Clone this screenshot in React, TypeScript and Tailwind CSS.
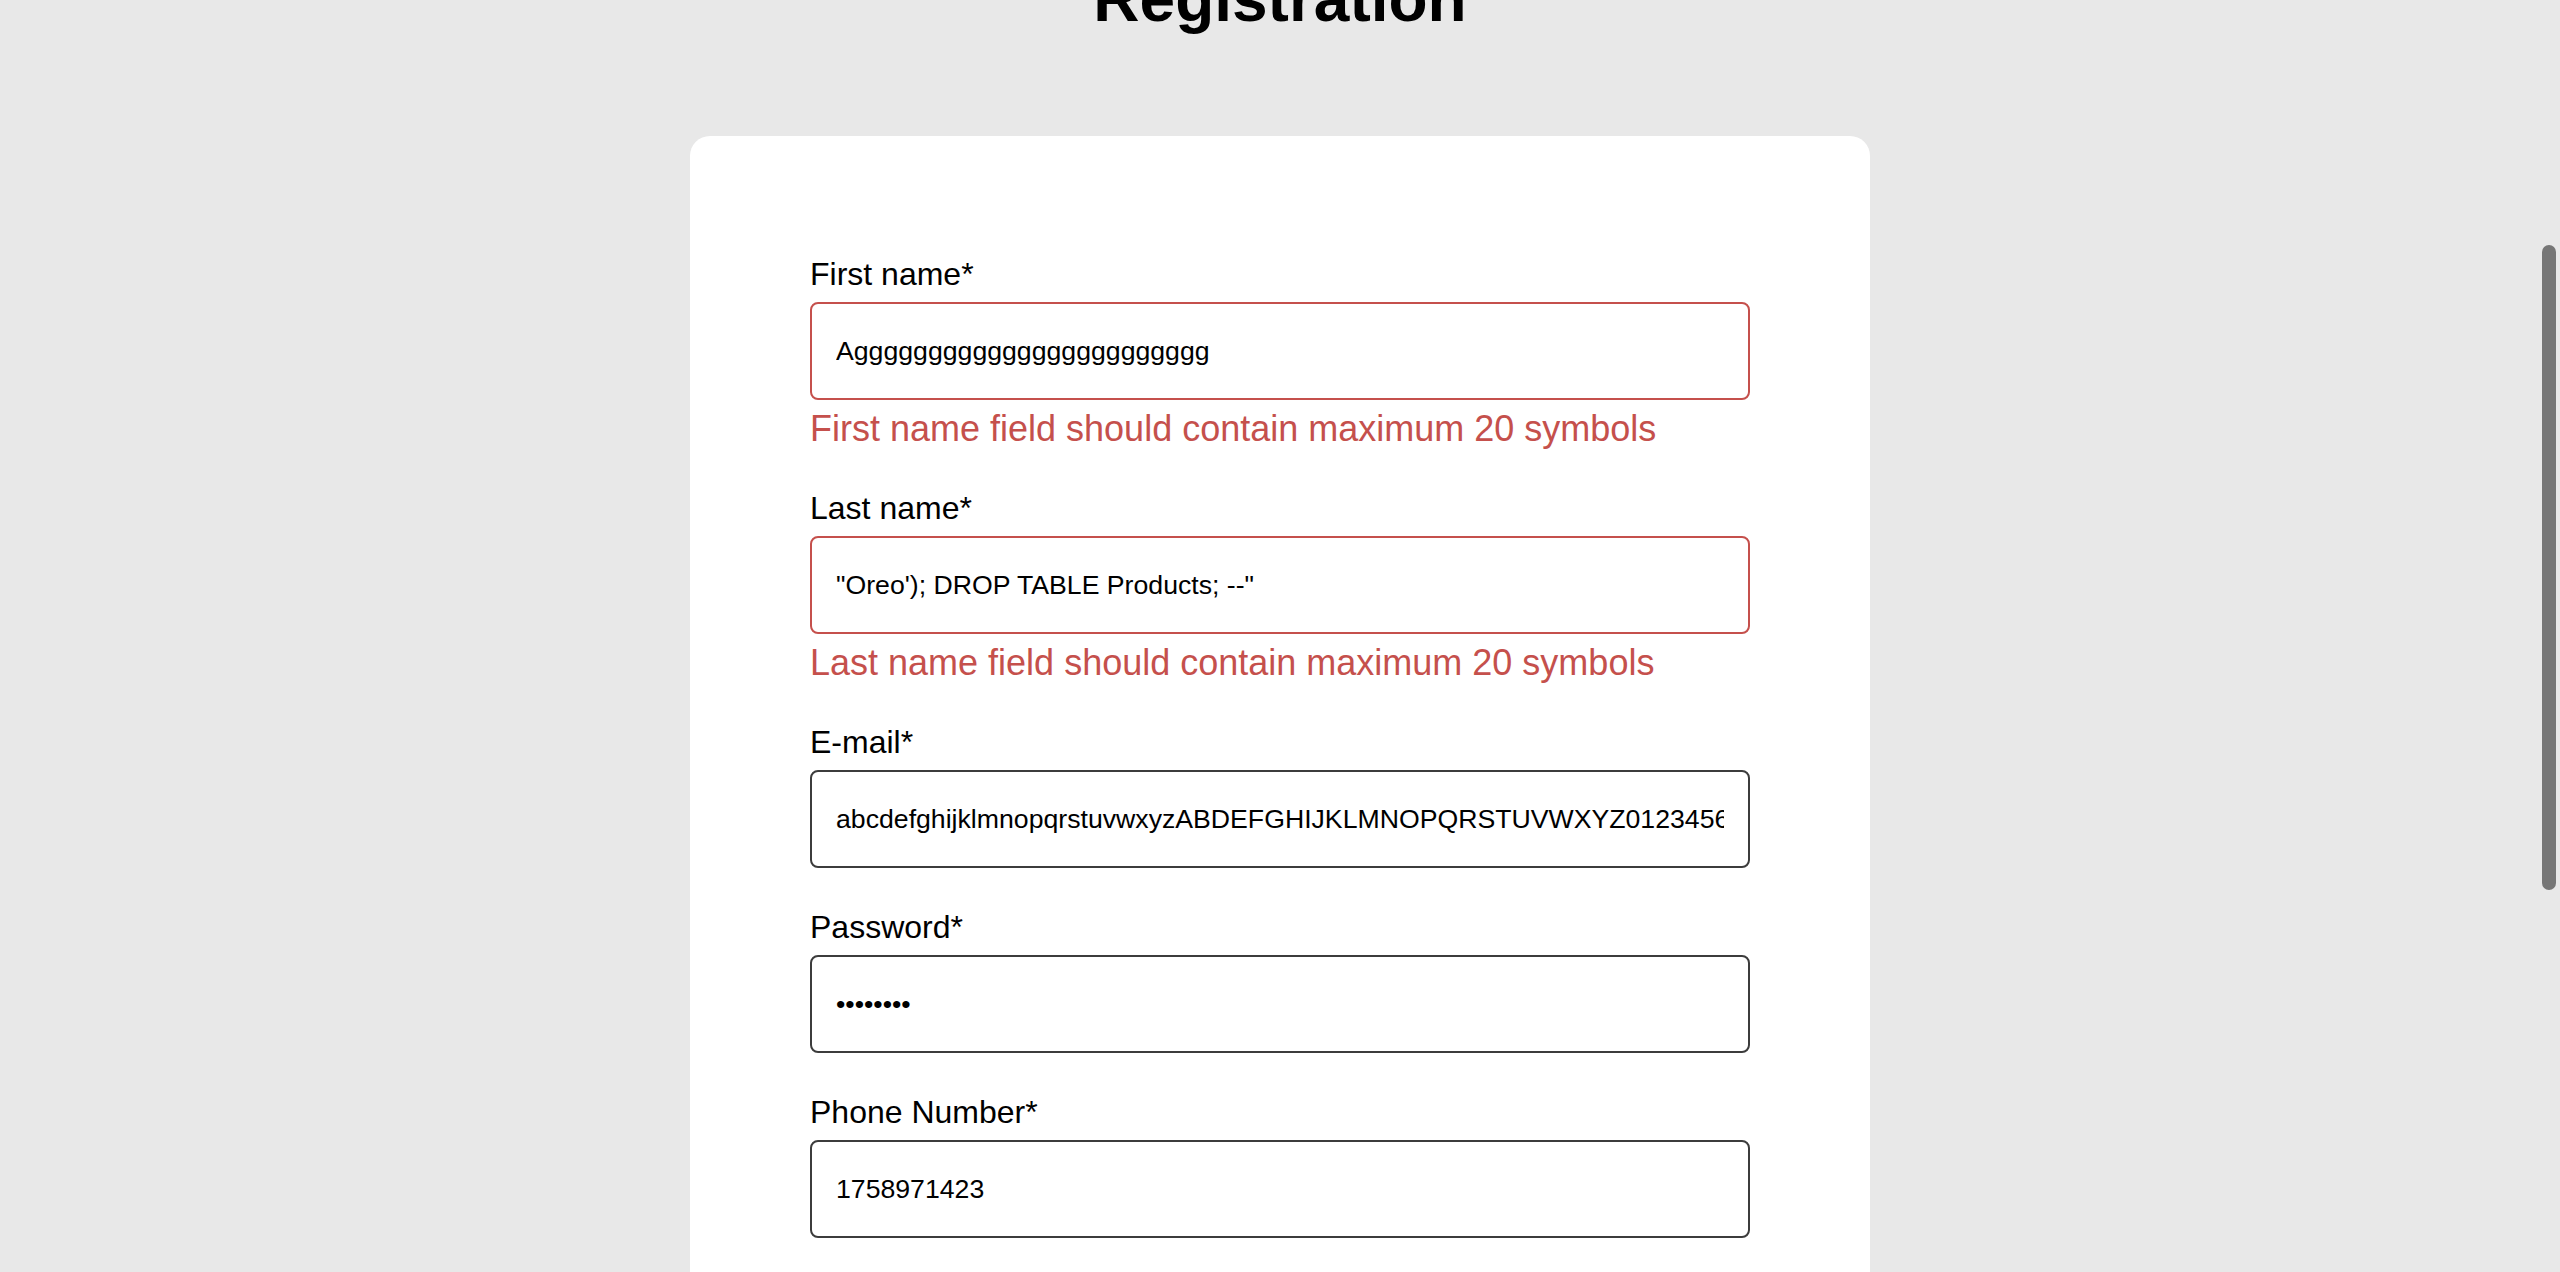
import { useState } from "react";

interface FieldProps {
  label: string;
  type?: string;
  value: string;
  error?: string;
  onChange: (v: string) => void;
}

function Field({ label, type = "text", value, error, onChange }: FieldProps) {
  return (
    <div className="mb-[41px]">
      <label className="block text-[32px] leading-[37px] text-black mb-[9px]">
        {label}
      </label>
      <input
        type={type}
        value={value}
        onChange={(e) => onChange(e.target.value)}
        className={
          error
            ? "block w-full h-[98px] px-[24px] border-2 border-[#c5504c] rounded-[8px] bg-white text-[26.67px] text-black outline-none"
            : "block w-full h-[98px] px-[24px] border-2 border-[#3c3c3c] rounded-[8px] bg-white text-[26.67px] text-black outline-none"
        }
      />
      {error && (
        <p className="mt-[8px] text-[36px] leading-[41px] text-[#c5504c]">
          {error}
        </p>
      )}
    </div>
  );
}

export default function App() {
  const [firstName, setFirstName] = useState("Agggggggggggggggggggggggg");
  const [lastName, setLastName] = useState(`"Oreo'); DROP TABLE Products; --"`);
  const [email, setEmail] = useState(
    "abcdefghijklmnopqrstuvwxyzABDEFGHIJKLMNOPQRSTUVWXYZ0123456789@gmail.com"
  );
  const [password, setPassword] = useState("12345678");
  const [phone, setPhone] = useState("1758971423");

  return (
    <div
      className="relative h-screen overflow-hidden bg-[#e8e8e8]"
      style={{ fontFamily: '"Liberation Sans", Arial, sans-serif' }}
    >
      <h1 className="-mt-[38px] text-center text-[64px] leading-[74px] font-bold text-black">
        Registration
      </h1>

      <div className="mt-[100px] mx-auto w-[1180px] bg-white rounded-[20px] px-[120px] pt-[120px] pb-[120px]">
        <Field
          label="First name*"
          value={firstName}
          onChange={setFirstName}
          error="First name field should contain maximum 20 symbols"
        />
        <Field
          label="Last name*"
          value={lastName}
          onChange={setLastName}
          error="Last name field should contain maximum 20 symbols"
        />
        <Field label="E-mail*" value={email} onChange={setEmail} />
        <Field
          label="Password*"
          type="password"
          value={password}
          onChange={setPassword}
        />
        <Field label="Phone Number*" value={phone} onChange={setPhone} />
      </div>

      {/* overlay scrollbar thumb */}
      <div className="fixed right-[4px] top-[245px] w-[14px] h-[645px] rounded-full bg-[#767676]" />
    </div>
  );
}
